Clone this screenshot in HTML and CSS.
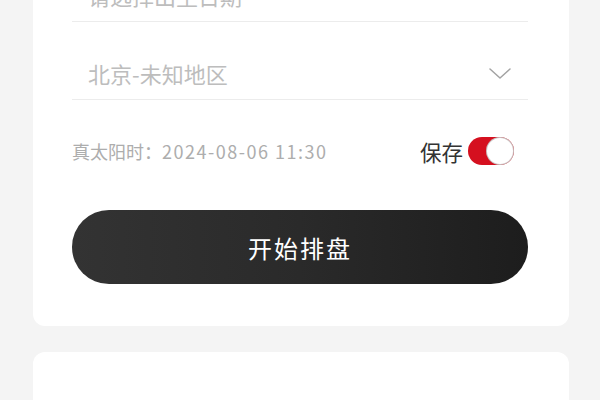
FILE: index.html
```html
<!DOCTYPE html>
<html lang="zh">
<head>
<meta charset="utf-8">
<link rel="stylesheet" href="styles.css">
</head>
<body>
<div class="page">
  <section class="card form-card">
    <div class="field">
      <span class="placeholder">请选择出生日期</span>
    </div>
    <div class="field">
      <span class="placeholder">北京-未知地区</span>
      <svg class="chevron" width="22" height="11" viewBox="0 0 22 11"><path d="M1 1 L11 10 L21 1" fill="none" stroke="#a3a3a3" stroke-width="1.5" stroke-linecap="round" stroke-linejoin="round"/></svg>
    </div>
    <div class="solar-row">
      <span class="solar">真太阳时：<span class="solar-time">2024-08-06 11:30</span></span>
      <div class="save">
        <span class="save-label">保存</span>
        <span class="toggle"><span class="knob"></span></span>
      </div>
    </div>
    <button class="start-btn">开始排盘</button>
  </section>
  <section class="card second-card">
    <div class="peek-row">
      <div class="peek-left"><span>出生时间</span><span>公历</span></div>
      <div class="peek-right"><span>男</span><span>女</span><span>乾造</span><span>坤造</span></div>
    </div>
  </section>
</div>
</body>
</html>
```

FILE: styles.css
```css
html, body {
  margin: 0;
  padding: 0;
  background: #f4f4f4;
  overflow: hidden;
}
body {
  font-family: "Noto Sans CJK SC", "Noto Sans", sans-serif;
  width: 600px;
  height: 400px;
}
.page {
  padding: 0 31px 0 33px;
}
.card {
  background: #fff;
  border-radius: 12px;
}
.form-card {
  margin-top: -66px;
  padding: 10px 41px 42px 39px;
}
.field {
  display: flex;
  align-items: center;
  justify-content: space-between;
  padding: 40px 17px 15px 16px;
  border-bottom: 1px solid #ececec;
  height: 22px;
}
.placeholder {
  font-size: 22px;
  line-height: 22px;
  color: #bdbdbd;
}
.chevron {
  display: block;
}
.solar-row {
  display: flex;
  align-items: center;
  justify-content: space-between;
  margin-top: 37px;
  height: 28px;
  padding-right: 14px;
}
.solar {
  font-size: 18px;
  color: #adadad;
}
.solar-time {
  letter-spacing: 1.5px;
}
.save {
  display: flex;
  align-items: center;
  gap: 5px;
}
.save-label {
  font-size: 21.5px;
  color: #333;
}
.toggle {
  position: relative;
  width: 46px;
  height: 28px;
  border-radius: 14px;
  background: #d5101f;
  display: block;
}
.knob {
  position: absolute;
  right: 1px;
  top: 1px;
  width: 26px;
  height: 26px;
  border-radius: 50%;
  background: #fff;
  box-shadow: 0 0 0 1px #c9c0c0;
}
.start-btn {
  display: block;
  width: 456px;
  height: 74px;
  margin-top: 45px;
  border: none;
  border-radius: 37px;
  background: linear-gradient(90deg, #333 0%, #2a2a2a 50%, #1d1d1d 100%);
  color: #fff;
  font-family: "Noto Sans CJK SC", "Noto Sans", sans-serif;
  font-size: 24px;
  letter-spacing: 2px;
  padding: 0;
}
.second-card {
  margin-top: 26px;
  padding: 43px 42px 30px 42px;
  height: 100px;
}
.peek-row {
  display: flex;
  justify-content: space-between;
  font-size: 20px;
  color: #555;
}
.peek-left, .peek-right {
  display: flex;
  gap: 36px;
}
```
